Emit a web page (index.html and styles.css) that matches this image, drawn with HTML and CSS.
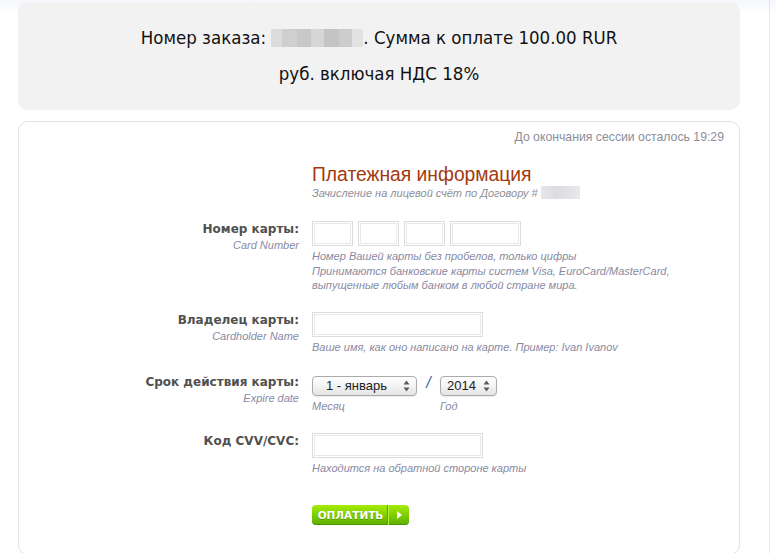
FILE: index.html
```html
<!DOCTYPE html>
<html lang="ru">
<head>
<meta charset="utf-8">
<title>Оплата</title>
<link rel="stylesheet" href="styles.css">
</head>
<body>
<div class="page">
  <div class="order">
    <p class="order-line">Номер заказа: <span class="blur-order"></span>. Сумма к оплате 100.00 RUR</p>
    <p class="order-line">руб. включая НДС 18%</p>
  </div>
  <div class="panel">
    <div class="timer">До окончания сессии осталось 19:29</div>
    <div class="heading">
      <h1 class="title">Платежная информация</h1>
      <div class="subtitle">Зачисление на лицевой счёт по Договору # <span class="blur-contract"></span></div>
    </div>

    <div class="row">
      <div class="label"><div class="label-main">Номер карты:</div><div class="label-sub">Card Number</div></div>
      <div class="field">
        <div class="card-inputs">
          <input class="inp w41" type="text">
          <input class="inp w41" type="text">
          <input class="inp w41" type="text">
          <input class="inp w71" type="text">
        </div>
        <div class="hint first">Номер Вашей карты без пробелов, только цифры</div>
        <div class="hint gap">Принимаются банковские карты систем Visa, EuroCard/MasterCard,<br>выпущенные любым банком в любой стране мира.</div>
      </div>
    </div>

    <div class="row">
      <div class="label"><div class="label-main">Владелец карты:</div><div class="label-sub">Cardholder Name</div></div>
      <div class="field">
        <input class="inp w171" type="text">
        <div class="hint first">Ваше имя, как оно написано на карте. Пример: Ivan Ivanov</div>
      </div>
    </div>

    <div class="row">
      <div class="label"><div class="label-main">Срок действия карты:</div><div class="label-sub">Expire date</div></div>
      <div class="field">
        <div class="expire">
          <div class="exp-col">
            <div class="sel sel-month">
              <span class="sel-text">1 - январь</span>
              <svg class="sel-arrows" width="7" height="12" viewBox="0 0 7 12"><path d="M3.5 0.5 L6.5 4.5 H0.5 Z M3.5 11.5 L6.5 7.5 H0.5 Z" fill="#5a5a5a"/></svg>
            </div>
            <div class="hint sub">Месяц</div>
          </div>
          <span class="slash">/</span>
          <div class="exp-col">
            <div class="sel sel-year">
              <span class="sel-text">2014</span>
              <svg class="sel-arrows" width="7" height="12" viewBox="0 0 7 12"><path d="M3.5 0.5 L6.5 4.5 H0.5 Z M3.5 11.5 L6.5 7.5 H0.5 Z" fill="#5a5a5a"/></svg>
            </div>
            <div class="hint sub">Год</div>
          </div>
        </div>
      </div>
    </div>

    <div class="row">
      <div class="label"><div class="label-main">Код CVV/CVC:</div></div>
      <div class="field">
        <input class="inp w171" type="text">
        <div class="hint first">Находится на обратной стороне карты</div>
      </div>
    </div>

    <div class="row submit-row">
      <div class="label"></div>
      <div class="field">
        <button class="pay" type="button"><span class="pay-text">ОПЛАТИТЬ</span><span class="pay-arrow"><svg width="5" height="8" viewBox="0 0 5 8"><path d="M0 0 L5 4 L0 8 Z" fill="#fff"/></svg></span></button>
      </div>
    </div>
  </div>
</div>
</body>
</html>
```
FILE: styles.css
```css
html, body {
  margin: 0;
  padding: 0;
  background: #fff;
}
body {
  font-family: "Liberation Sans", Arial, sans-serif;
  background: linear-gradient(#f4f7fb, #ffffff 14px) no-repeat;
}
.page {
  width: 722px;
  padding: 2px 29px 0 18px;
  border-right: 1px solid #e6e6e6;
  min-height: 551px;
  box-sizing: content-box;
}
.order {
  background: #f2f2f2;
  border-radius: 10px;
  padding: 18px 0;
  text-align: center;
}
.order-line {
  margin: 0;
  font-family: "DejaVu Sans Condensed", "DejaVu Sans", sans-serif;
  font-size: 18.5px;
  line-height: 36px;
  color: #111;
}
.blur-order {
  display: inline-block;
  width: 92px;
  height: 18px;
  vertical-align: -3px;
  background: linear-gradient(90deg, #dcdcdc 0 12%, #cfcfcf 12% 28%, #c8c8c8 28% 44%, #d6d6d6 44% 58%, #c4c4c4 58% 74%, #cdcdcd 74% 88%, #e2e2e2 88%);
}
.panel {
  margin-top: 11px;
  border: 1px solid #e3e3e3;
  border-radius: 10px;
  padding: 8px 15px 29px 0;
}
.timer {
  text-align: right;
  font-size: 12.25px;
  line-height: 14px;
  color: #8d8d9a;
}
.heading {
  margin: 20px 0 0 293px;
}
.title {
  margin: 0;
  font-weight: normal;
  font-size: 19.3px;
  line-height: 22px;
  color: #a23a0e;
}
.subtitle {
  font-size: 11px;
  font-style: italic;
  line-height: 14px;
  color: #8e8e98;
}
.blur-contract {
  display: inline-block;
  width: 39px;
  height: 13px;
  vertical-align: -2px;
  background: linear-gradient(90deg, #e6e6ea, #dcdce2 40%, #e8e8ec);
}
.row {
  display: grid;
  grid-template-columns: 280px 1fr;
  column-gap: 13px;
  margin-top: 20px;
}
.heading + .row {
  margin-top: 21px;
}
.label {
  text-align: right;
}
.label-main {
  font-family: "DejaVu Sans", Verdana, sans-serif;
  font-weight: bold;
  font-size: 12px;
  line-height: 16px;
  color: #505050;
}
.label-sub {
  font-size: 11px;
  font-style: italic;
  line-height: 16px;
  color: #8a8aa6;
}
.card-inputs {
  display: flex;
  gap: 5px;
}
.inp {
  display: block;
  height: 25px;
  box-sizing: border-box;
  margin: 0;
  padding: 0 4px;
  border: 1px solid #dcdcdc;
  box-shadow: inset 0 0 0 1px #fff, inset 0 0 0 2px #e8e8e8;
  background: #fff;
  font-family: "Liberation Sans", Arial, sans-serif;
  font-size: 13px;
}
.w41 { width: 41px; }
.w71 { width: 71px; }
.w171 { width: 171px; }
.hint {
  font-size: 11px;
  font-style: italic;
  line-height: 14px;
  color: #8a8aa2;
}
.hint.first {
  margin-top: 3px;
}
.hint.gap {
  margin-top: 1px;
}
.expire {
  display: flex;
  align-items: flex-start;
  padding-top: 2px;
}
.exp-col {
  display: flex;
  flex-direction: column;
}
.sel {
  display: flex;
  align-items: center;
  justify-content: space-between;
  height: 20px;
  box-sizing: border-box;
  border: 1px solid #ababab;
  border-radius: 4px;
  background: linear-gradient(#ffffff, #f3f3f3 50%, #e4e4e4);
  box-shadow: 0 1px 1px rgba(0,0,0,0.08);
  font-size: 13px;
  color: #222;
  padding: 0 6px 0 13px;
}
.sel-month { width: 105px; }
.sel-year { width: 57px; padding-left: 6px; }
.sel-text { line-height: 18px; }
.sel-arrows { display: block; }
.hint.sub {
  margin-top: 3px;
}
.slash {
  width: 23px;
  text-align: center;
  font-size: 16px;
  font-style: italic;
  line-height: 14px;
  color: #3a66ad;
}
.submit-row {
  margin-top: 30px;
}
.pay {
  display: flex;
  align-items: stretch;
  width: 97px;
  height: 20px;
  padding: 0;
  border: none;
  border-radius: 4px;
  background: linear-gradient(#a6ec04, #7fce00 50%, #5cae00);
  box-shadow: inset 0 -1px 0 rgba(40,110,0,0.4);
  cursor: pointer;
}
.pay-text {
  flex: 0 0 76px;
  padding-left: 2px;
  box-sizing: border-box;
  font-family: "DejaVu Sans", Verdana, sans-serif;
  font-weight: bold;
  font-size: 10.5px;
  line-height: 20px;
  color: #fff;
  text-shadow: 0 1px 0 rgba(60,110,0,0.5);
  text-align: center;
  border-right: 1px solid #5aa500;
}
.pay-arrow {
  flex: 1;
  display: flex;
  align-items: center;
  justify-content: center;
  border-left: 1px solid #b7f040;
}
.pay-arrow svg { display: block; }
```
